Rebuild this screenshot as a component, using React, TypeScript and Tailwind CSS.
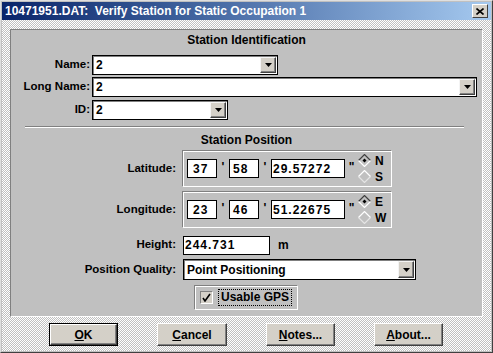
import React from 'react';

function DropButton() {
  return (
    <div className="flex h-full w-[16px] shrink-0 items-center justify-center border border-t-[#f4f4f4] border-l-[#f4f4f4] border-r-[#404040] border-b-[#404040] bg-[#d4d0c8] shadow-[inset_-1px_-1px_0_#808080]">
      <svg width="7" height="4" viewBox="0 0 7 4">
        <path d="M0 0h7L3.5 4z" fill="#000" />
      </svg>
    </div>
  );
}

function Combo({ value, className }: { value: string; className: string }) {
  return (
    <div className={`flex items-center border border-black bg-white p-[1px] shadow-[inset_1px_1px_0_#808080] ${className}`}>
      <span className="flex-1 pl-[2px] text-[12px] font-bold leading-none">{value}</span>
      <DropButton />
    </div>
  );
}

function Field({ value, className }: { value: string; className: string }) {
  return (
    <div className={`flex h-[19px] shrink-0 items-center border border-black bg-white text-[12px] font-bold leading-none tracking-[1px] ${className}`}>
      {value}
    </div>
  );
}

function Diamond({ on }: { on: boolean }) {
  return (
    <svg width="13" height="13" viewBox="0 0 13 13">
      <path d="M0.5 6.5L6.5 0.5L12.5 6.5" fill="none" stroke={on ? '#404040' : '#ffffff'} strokeWidth="1.2" />
      <path d="M0.5 6.5L6.5 12.5L12.5 6.5" fill="none" stroke={on ? '#ffffff' : '#e4e4e4'} strokeWidth="1.2" />
      {on && <path d="M6.5 4.5L8.5 6.5L6.5 8.5L4.5 6.5z" fill="#000" />}
    </svg>
  );
}

function Mark({ ch, className }: { ch: string; className: string }) {
  return (
    <span className={`h-[19px] shrink-0 pt-[2px] text-center text-[12px] font-black leading-none ${className}`}>{ch}</span>
  );
}

function Coord({ d, m, s, a, b }: { d: string; m: string; s: string; a: string; b: string }) {
  return (
    <div className="flex h-[37px] w-[210px] items-center border border-t-[#808080] border-l-[#808080] border-r-white border-b-white pl-[4px] shadow-[inset_1px_1px_0_#fff]">
      <Field value={d} className="w-[30px] pl-[5px]" />
      <Mark ch="'" className="w-[12px]" />
      <Field value={m} className="w-[30px] pl-[3px]" />
      <Mark ch="'" className="w-[12px]" />
      <Field value={s} className="w-[74px] pl-[1px]" />
      <Mark ch={'"'} className="w-[13px]" />
      <div className="flex flex-col">
        <div className="flex h-[16px] items-center gap-[4px]">
          <Diamond on />
          <span className="text-[12px] font-bold">{a}</span>
        </div>
        <div className="flex h-[16px] items-center gap-[4px]">
          <Diamond on={false} />
          <span className="text-[12px] font-bold">{b}</span>
        </div>
      </div>
    </div>
  );
}

function Btn({ label, u, def, className }: { label: string; u: number; def?: boolean; className: string }) {
  return (
    <div className={`h-[23px] ${def ? 'border border-black' : ''} ${className}`}>
      <div className="flex h-full items-center justify-center border border-t-white border-l-white border-r-[#404040] border-b-[#404040] bg-[#d4d0c8] shadow-[inset_-1px_-1px_0_#808080] text-[12px] font-bold">
        <span>
          {label.slice(0, u)}
          <span className="underline">{label.charAt(u)}</span>
          {label.slice(u + 1)}
        </span>
      </div>
    </div>
  );
}

export default function App() {
  return (
    <div className="h-[353px] w-[493px] border border-t-[#dfdfdf] border-l-[#dfdfdf] border-r-[#404040] border-b-[#404040] bg-[#c0c0c0] p-[1px] font-['Liberation_Sans',Arial,sans-serif] text-black">
      <div className="flex h-full flex-col">
        <div className="flex h-[18px] shrink-0 items-center justify-between bg-linear-to-r from-[#0a246a] to-[#a6caf0] pl-[3px] pr-[3px]">
          <span className="text-[12px] font-bold text-white">10471951.DAT:&nbsp; Verify Station for Static Occupation 1</span>
          <div className="flex h-[14px] w-[16px] items-center justify-center border border-t-white border-l-white border-r-[#404040] border-b-[#404040] bg-[#d4d0c8]">
            <svg width="8" height="7" viewBox="0 0 8 7">
              <path d="M0.5 0.5L7.5 6.5M7.5 0.5L0.5 6.5" stroke="#000" strokeWidth="1.6" />
            </svg>
          </div>
        </div>
        <div className="flex flex-1 flex-col bg-[image:repeating-conic-gradient(#c0c0c0_0%_25%,#ffffff_0%_50%)] bg-[length:2px_2px] px-[8px] pt-[9px]">
          <div className="flex h-[288px] flex-col border border-t-[#808080] border-l-[#808080] border-r-white border-b-white bg-[#c0c0c0]">
            <div className="mt-[3px] text-center text-[12px] font-bold leading-[14px]">Station Identification</div>

            <div className="mt-[8px] flex h-[20px] items-center gap-[2px]">
              <span className="w-[79px] text-right text-[11.5px] font-bold">Name:</span>
              <Combo value="2" className="h-[20px] w-[186px]" />
            </div>
            <div className="mt-[2px] flex h-[20px] items-center gap-[2px]">
              <span className="w-[79px] text-right text-[11.5px] font-bold">Long Name:</span>
              <Combo value="2" className="h-[20px] w-[385px]" />
            </div>
            <div className="mt-[3px] flex h-[20px] items-center gap-[2px]">
              <span className="w-[79px] text-right text-[11.5px] font-bold">ID:</span>
              <Combo value="2" className="h-[20px] w-[136px]" />
            </div>

            <div className="ml-[14px] mt-[6px] h-[2px] w-[439px] border-t border-t-[#808080] border-b border-b-white" />

            <div className="mt-[5px] text-center text-[12px] font-bold leading-[14px]">Station Position</div>

            <div className="mt-[3px] flex items-center gap-[6px]">
              <span className="w-[165px] text-right text-[11.5px] font-bold">Latitude:</span>
              <Coord d="37" m="58" s="29.57272" a="N" b="S" />
            </div>
            <div className="mt-[4px] flex items-center gap-[6px]">
              <span className="w-[165px] text-right text-[11.5px] font-bold">Longitude:</span>
              <Coord d="23" m="46" s="51.22675" a="E" b="W" />
            </div>

            <div className="mt-[8px] flex h-[18px] items-center gap-[7px]">
              <span className="w-[165px] text-right text-[11.5px] font-bold">Height:</span>
              <Field value="244.731" className="h-[18px] w-[87px] pl-[1px] tracking-[0.5px]" />
              <span className="ml-[1px] text-[12px] font-bold">m</span>
            </div>
            <div className="mt-[5px] flex h-[21px] items-center gap-[7px]">
              <span className="w-[165px] text-right text-[11.5px] font-bold">Position Quality:</span>
              <Combo value="Point Positioning" className="h-[21px] w-[233px]" />
            </div>

            <div className="ml-[183px] mt-[5px] flex h-[25px] w-[104px] items-center border border-t-[#808080] border-l-[#808080] border-r-white border-b-white pl-[5px] shadow-[inset_1px_1px_0_#fff]">
              <div className="flex h-[13px] w-[13px] items-center justify-center border border-t-[#808080] border-l-[#808080] border-r-white border-b-white bg-[#d4d0c8]">
                <svg width="9" height="9" viewBox="0 0 9 9">
                  <path d="M1 5L3 8L8 1" fill="none" stroke="#000" strokeWidth="1.6" />
                </svg>
              </div>
              <span className="ml-[5px] border border-dotted border-black px-[2px] text-[12px] font-bold leading-[15px]">Usable GPS</span>
            </div>
          </div>

          <div className="ml-[39px] mt-[6px] flex gap-[39px]">
            <Btn label="OK" u={0} def className="w-[69px]" />
            <Btn label="Cancel" u={0} className="w-[70px]" />
            <Btn label="Notes..." u={0} className="w-[69px]" />
            <Btn label="About..." u={0} className="w-[69px]" />
          </div>
        </div>
      </div>
    </div>
  );
}
